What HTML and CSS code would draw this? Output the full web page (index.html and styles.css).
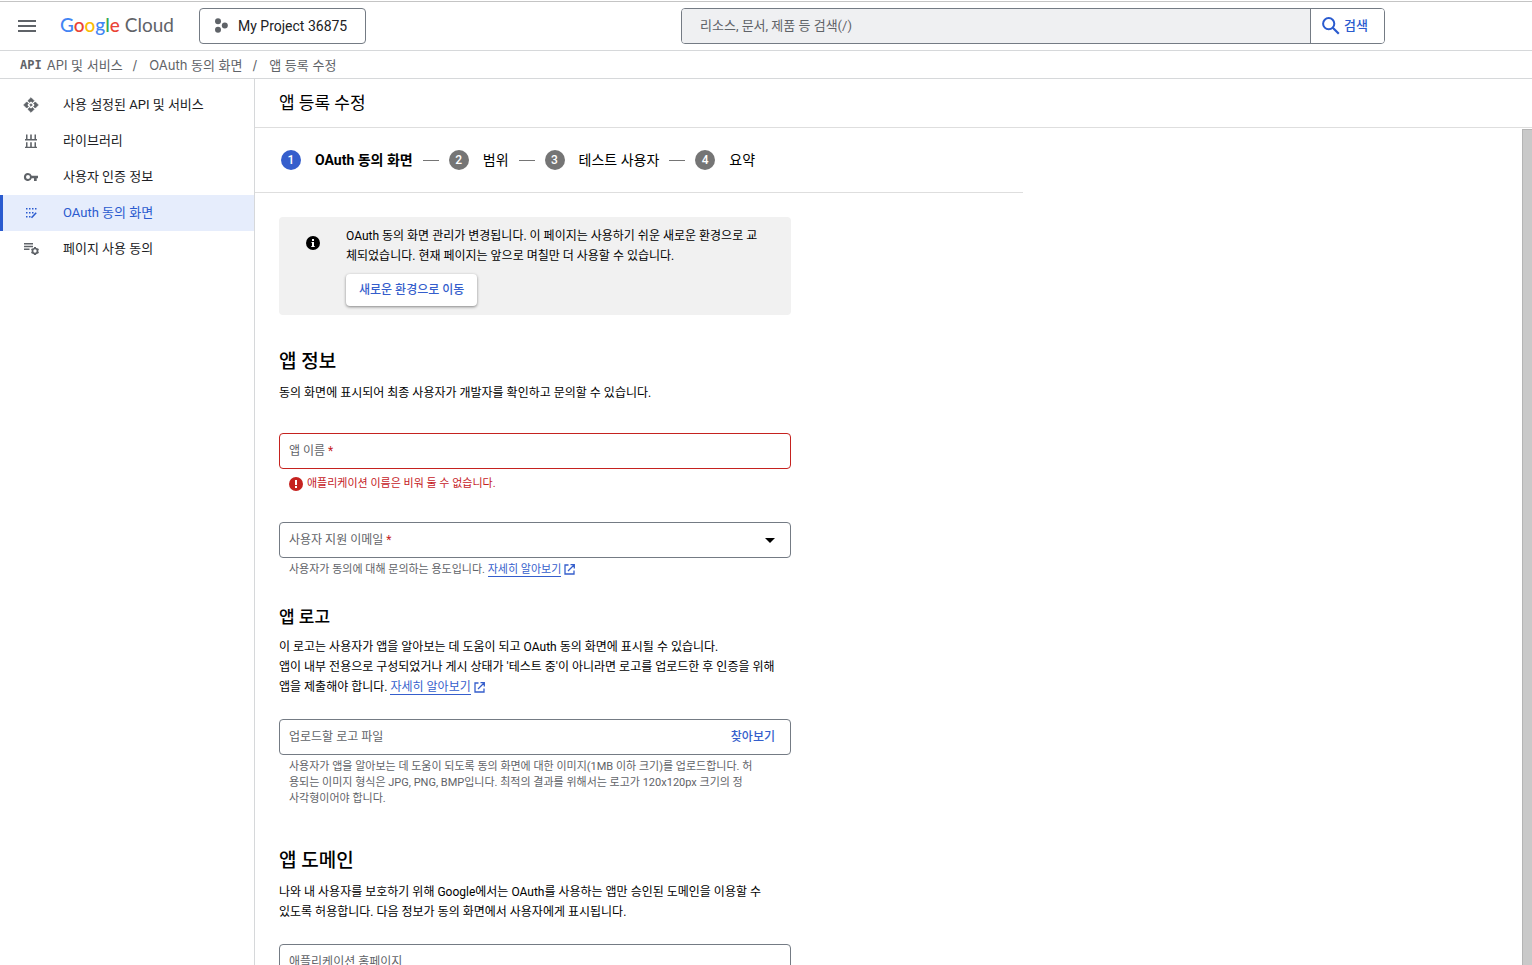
FILE: index.html
```html
<!DOCTYPE html>
<html lang="ko">
<head>
<meta charset="utf-8">
<meta name="viewport" content="width=device-width, initial-scale=1">
<title>앱 등록 수정 – Google Cloud</title>
<link rel="stylesheet" href="styles.css">
</head>
<body>
<div class="app">
  <header class="topbar">
    <button class="menu-button" type="button" aria-label="메뉴">
      <svg width="18" height="12" viewBox="0 0 18 12" aria-hidden="true"><path d="M0 0h18v2H0zM0 5h18v2H0zM0 10h18v2H0z"/></svg>
    </button>
    <a class="logo" href="#"><span class="logo-google"><span class="blue">G</span><span class="red">o</span><span class="yellow">o</span><span class="blue">g</span><span class="green">l</span><span class="red">e</span></span> <span>Cloud</span></a>
    <button class="project" type="button">
      <svg width="14" height="16" viewBox="0 0 14 16" aria-hidden="true"><circle cx="4" cy="3.300" r="3"/><circle cx="10.800" cy="7.500" r="3"/><circle cx="4" cy="11.800" r="3"/></svg>
      My Project 36875
    </button>
    <form class="search" role="search">
      <input class="search-input" type="text" aria-label="검색어" placeholder="리소스, 문서, 제품 등 검색(/)">
      <button class="search-button" type="button">
        <svg width="18" height="18" viewBox="0 0 18 18" aria-hidden="true"><circle cx="6.7" cy="6.7" r="5.6" fill="none" stroke="currentColor" stroke-width="2"/><path d="M10.8 10.8l6 6" stroke="currentColor" stroke-width="2.2"/></svg>
        검색
      </button>
    </form>
  </header>

  <nav class="breadcrumbs" aria-label="탐색경로">
    <span class="api-mark">API</span>
    <a href="#">API 및 서비스</a><span class="slash">/</span>
    <a href="#">OAuth 동의 화면</a><span class="slash">/</span>
    <span>앱 등록 수정</span>
  </nav>

  <div class="body">
    <nav class="sidebar" aria-label="API 및 서비스">
      <a class="nav-item" href="#">
        <svg width="16" height="16" viewBox="0 0 24 24" aria-hidden="true"><path stroke="currentColor" stroke-width="1" stroke-linejoin="round" d="M14 12l-2 2-2-2 2-2zM12 6l2.120 2.120 2.500-2.500L12 1 7.380 5.620l2.500 2.500zM6 12l2.120-2.120-2.500-2.500L1 12l4.620 4.620 2.500-2.500zM18 12l-2.120 2.120 2.500 2.500L23 12l-4.620-4.620-2.500 2.500zM12 18l-2.120-2.120-2.500 2.500L12 23l4.620-4.620-2.500-2.500z"/></svg>
        사용 설정된 API 및 서비스
      </a>
      <a class="nav-item" href="#">
        <svg width="16" height="16" viewBox="0 0 16 16" aria-hidden="true"><path d="M3 1.500h1.500V6h2.700V1.500h1.600V6h2.700V1.500H13V6h1v1.400H2V6h1zM3 9.300h1.500v4.500h2.700V9.300h1.600v4.500h2.700V9.300H13v4.500h1v1.300H2v-1.300h1z"/></svg>
        라이브러리
      </a>
      <a class="nav-item" href="#">
        <svg width="16" height="16" viewBox="0 0 16 16" aria-hidden="true"><path fill-rule="evenodd" d="M5 4a4 4 0 1 0 3.700 5.300H11V12h2.700V9.300H15V6.700H8.700A4 4 0 0 0 5 4zm0 2a2 2 0 1 1 0 4 2 2 0 0 1 0-4z"/></svg>
        사용자 인증 정보
      </a>
      <a class="nav-item selected" href="#" aria-current="page">
        <svg width="16" height="16" viewBox="0 0 16 16" aria-hidden="true"><path d="M3 3h1.500v1.500H3zM6 3h1.500v1.500H6zM9 3h1.500v1.500H9zM12 3h1.500v1.500H12zM3 7h1.500v1.500H3zM6 7h1.500v1.500H6zM9 7h1.500v1.500H9zM3 11h1.500v1.500H3zM6 11h1.500v1.500H6z"/><path d="M8.500 12.700l4.700-4.900" stroke="currentColor" stroke-width="1.600"/></svg>
        OAuth 동의 화면
      </a>
      <a class="nav-item" href="#">
        <svg width="16" height="16" viewBox="0 0 16 16" aria-hidden="true"><path d="M1 2h9v1.500H1zM1 4.800h9v1.500H1zM1 7.600h5.500v1.500H1z"/><circle cx="12" cy="10" r="2.500" fill="none" stroke="currentColor" stroke-width="1.700"/><path d="M12 6v1.500M12 12.500V14M8.500 8l1.400.8M14.100 11.200l1.400.8M8.500 12l1.400-.8M14.100 8.800l1.400-.8" stroke="currentColor" stroke-width="2"/></svg>
        페이지 사용 동의
      </a>
    </nav>

    <main class="main">
      <h1 class="page-title">앱 등록 수정</h1>
      <div class="viewport">
        <div class="content">
          <ol class="stepper">
            <li class="step active"><span class="dot">1</span>OAuth 동의 화면</li>
            <li class="step"><span class="dot">2</span>범위</li>
            <li class="step"><span class="dot">3</span>테스트 사용자</li>
            <li class="step"><span class="dot">4</span>요약</li>
          </ol>

          <form class="form">
            <section class="notice">
              <svg class="notice-icon" width="14" height="14" viewBox="0 0 14 14" aria-hidden="true"><circle cx="7" cy="7" r="7"/><path fill="#fff" d="M6 3h2v2H6zM5.500 6H8v4h.700v1H5.300v-1H6V7h-.500z"/></svg>
              <div class="notice-body">
                <p>OAuth 동의 화면 관리가 변경됩니다. 이 페이지는 사용하기 쉬운 새로운 환경으로 교<br>체되었습니다. 현재 페이지는 앞으로 며칠만 더 사용할 수 있습니다.</p>
                <button class="raised" type="button">새로운 환경으로 이동</button>
              </div>
            </section>

            <section class="section">
              <h2>앱 정보</h2>
              <p>동의 화면에 표시되어 최종 사용자가 개발자를 확인하고 문의할 수 있습니다.</p>
              <div class="field invalid">
                <label for="app-name">앱 이름 <span class="required">*</span></label>
                <input id="app-name" type="text" aria-describedby="app-name-error">
              </div>
              <p class="error" id="app-name-error">
                <svg width="14" height="14" viewBox="0 0 14 14" aria-hidden="true"><circle cx="7" cy="7" r="7" fill="currentColor"/><path fill="#fff" d="M6 3h2v5H6zM6 9h2v2H6z"/></svg>
                애플리케이션 이름은 비워 둘 수 없습니다.
              </p>
              <div class="field next">
                <label for="email">사용자 지원 이메일 <span class="required">*</span></label>
                <select id="email"><option value=""></option></select>
                <svg class="arrow" width="10" height="5" viewBox="0 0 10 5" aria-hidden="true"><path d="M0 0h10L5 5z"/></svg>
              </div>
              <p class="hint">사용자가 동의에 대해 문의하는 용도입니다. <a class="link" href="#"><span>자세히 알아보기</span><svg width="11" height="11" viewBox="0 0 11 11" aria-hidden="true"><path d="M4.500 1H1v9h9V6.500M6.500.700h3.800v3.800M10 1L4 7" fill="none" stroke="currentColor" stroke-width="1.300"/></svg></a></p>
            </section>

            <section class="section logo-section">
              <h3>앱 로고</h3>
              <p>이 로고는 사용자가 앱을 알아보는 데 도움이 되고 OAuth 동의 화면에 표시될 수 있습니다.<br>앱이 내부 전용으로 구성되었거나 게시 상태가 '테스트 중'이 아니라면 로고를 업로드한 후 인증을 위해<br>앱을 제출해야 합니다. <a class="link" href="#"><span>자세히 알아보기</span><svg width="11" height="11" viewBox="0 0 11 11" aria-hidden="true"><path d="M4.500 1H1v9h9V6.500M6.500.700h3.800v3.800M10 1L4 7" fill="none" stroke="currentColor" stroke-width="1.300"/></svg></a></p>
              <div class="field">
                <label for="logo-file">업로드할 로고 파일</label>
                <input id="logo-file" type="text" readonly>
                <button class="browse" type="button">찾아보기</button>
              </div>
              <p class="hint">사용자가 앱을 알아보는 데 도움이 되도록 동의 화면에 대한 이미지(1MB 이하 크기)를 업로드합니다. 허<br>용되는 이미지 형식은 JPG, PNG, BMP입니다. 최적의 결과를 위해서는 로고가 120x120px 크기의 정<br>사각형이어야 합니다.</p>
            </section>

            <section class="section domain-section">
              <h2>앱 도메인</h2>
              <p>나와 내 사용자를 보호하기 위해 Google에서는 OAuth를 사용하는 앱만 승인된 도메인을 이용할 수<br>있도록 허용합니다. 다음 정보가 동의 화면에서 사용자에게 표시됩니다.</p>
              <div class="field">
                <label for="homepage">애플리케이션 홈페이지</label>
                <input id="homepage" type="text">
              </div>
            </section>
          </form>
        </div>
        <div class="scroll-thumb"></div>
      </div>
    </main>
  </div>
</div>
</body>
</html>
```
FILE: styles.css
```css
* { box-sizing: border-box; }

body {
  margin: 0;
  background: #fff;
  color: #000;
  font: 12px/20px Roboto, "Noto Sans CJK KR", sans-serif;
}

button, input, select { font: inherit; color: inherit; margin: 0; }
button { cursor: pointer; }
a { color: inherit; text-decoration: none; }
h1, h2, h3, p, ol { margin: 0; padding: 0; font-weight: 400; }
svg { flex: none; fill: currentColor; }

.app {
  display: flex;
  flex-direction: column;
  height: 100vh;
  overflow: hidden;
}

.topbar {
  display: flex;
  flex: none;
  align-items: center;
  height: 51px;
  padding: 2px 147px 0 12px;
  border-bottom: 1px solid #d6d8da;
  background: linear-gradient(#c4c4c4, #c4c4c4) 0 1px / 100% 1px no-repeat;
}
.menu-button {
  display: flex;
  padding: 6px;
  border: 0;
  background: none;
  color: #5f6368;
}
.logo {
  width: 139px;
  padding: 0 0 2px 18px;
  color: #5f6368;
  font: 19px/24px Lato, sans-serif;
  white-space: nowrap;
}
.logo-google { font-weight: 500; }
.blue { color: #4285f4; }
.red { color: #ea4335; }
.yellow { color: #fbbc04; }
.green { color: #34a853; }
.project {
  display: flex;
  align-items: center;
  gap: 10px;
  height: 36px;
  margin-left: 18px;
  padding: 0 18px 0 14px;
  border: 1px solid #747b84;
  border-radius: 4px;
  background: #fff;
  color: #202124;
  font-size: 14px;
  white-space: nowrap;
}
.project svg { color: #5f6368; }
.search {
  display: flex;
  flex: 0 1 704px;
  height: 36px;
  margin-left: auto;
  border: 1px solid #747b84;
  border-radius: 4px;
  overflow: hidden;
}
.search-input {
  flex: 1;
  min-width: 0;
  padding: 0 18px;
  border: 0;
  background: #eff0f2;
  font-size: 13px;
}
.search-input::placeholder { color: #5f6368; opacity: 1; }
.search-button {
  display: flex;
  align-items: center;
  gap: 4px;
  padding: 0 16px 0 11px;
  border: 0;
  border-left: 1px solid #747b84;
  background: #fff;
  color: #2a5bcf;
  font-size: 13px;
  font-weight: 500;
}

.breadcrumbs {
  display: flex;
  flex: none;
  align-items: center;
  height: 28px;
  padding-left: 20px;
  border-bottom: 1px solid #d6d8da;
  color: #5f6368;
  font-family: Inter, "Noto Sans CJK KR", sans-serif;
  font-size: 13px;
}
.api-mark {
  margin-right: 5px;
  font: bold 12px/20px "DejaVu Sans Mono", monospace;
}
.slash { padding: 0 12px 0 10px; }

.body { display: flex; flex: 1; min-height: 0; }
.sidebar {
  flex: none;
  width: 255px;
  padding-top: 8px;
  border-right: 1px solid #d6d8da;
}
.nav-item {
  display: flex;
  align-items: center;
  gap: 24px;
  height: 36px;
  padding-left: 20px;
  border-left: 3px solid transparent;
  color: #202124;
  font-size: 13px;
}
.nav-item svg { color: #5f6368; }
.nav-item.selected {
  border-left-color: #2a5bcf;
  background: #e6edfc;
  color: #2a5bcf;
}
.nav-item.selected svg { color: #2a5bcf; }

.main { display: flex; flex: 1; flex-direction: column; min-width: 0; }
.page-title {
  flex: none;
  height: 49px;
  padding-left: 24px;
  border-bottom: 1px solid #dedede;
  font-size: 17px;
  line-height: 48px;
}
.viewport {
  display: flex;
  flex: 1;
  justify-content: space-between;
  min-height: 0;
  overflow: hidden;
}
.content { flex: 0 1 768px; }
.scroll-thumb {
  flex: none;
  width: 10px;
  margin-top: 1px;
  border: solid #b4b4b4;
  border-width: 1px 0 0 1px;
  background: #c9c9c9;
}

.stepper {
  display: flex;
  align-items: center;
  height: 65px;
  padding-left: 26px;
  border-bottom: 1px solid #dedede;
  list-style: none;
  font-size: 14px;
}
.step { display: flex; align-items: center; white-space: nowrap; }
.step + .step::before {
  width: 16px;
  height: 1px;
  margin: 0 10px;
  background: #757575;
  content: "";
}
.step.active { font-weight: 700; }
.dot {
  width: 20px;
  height: 20px;
  margin-right: 14px;
  border-radius: 50%;
  background: #757575;
  color: #fff;
  font-size: 12px;
  font-weight: 500;
  text-align: center;
}
.active .dot { background: #355ecc; }

.form { max-width: 536px; padding: 24px 0 0 24px; }
.notice {
  display: flex;
  gap: 26px;
  padding: 9px 20px 9px 27px;
  border-radius: 4px;
  background: #f1f1f1;
}
.notice-icon { margin-top: 10px; }
.notice-body p { white-space: nowrap; }
.raised {
  height: 32px;
  margin-top: 8px;
  padding: 0 13px;
  border: 0;
  border-radius: 4px;
  background: #fff;
  box-shadow: 0 1px 3px rgba(0, 0, 0, .45);
  color: #355ecc;
  font-weight: 500;
}

.section { padding-top: 33px; white-space: nowrap; }
.section h2 { margin-bottom: 7px; font-size: 19px; font-weight: 500; line-height: 28px; }
.section h3 { margin-bottom: 8px; font-size: 17px; font-weight: 500; line-height: 24px; }
.logo-section { padding-top: 27px; }
.domain-section { padding-top: 40px; }

.field {
  display: flex;
  align-items: center;
  height: 36px;
  margin-top: 22px;
  padding: 0 15px 0 9px;
  border: 1px solid #747b84;
  border-radius: 4px;
  color: #5f6368;
}
.field input, .field select {
  flex: 1;
  align-self: stretch;
  min-width: 0;
  border: 0;
  outline: 0;
  appearance: none;
  background: none;
}
.field.invalid { margin-top: 30px; border-color: #c5221f; }
.field.next { margin-top: 30px; }
.required { color: #c5221f; }
.arrow { color: #000; pointer-events: none; }
.browse {
  padding: 0;
  border: 0;
  background: none;
  color: #355ecc;
  font-weight: 500;
}

.section .error, .section .hint {
  padding-left: 10px;
  font-size: 11px;
  line-height: 16px;
}
.section .error {
  display: flex;
  align-items: center;
  gap: 4px;
  margin-top: 7px;
  color: #c5221f;
}
.section .hint { margin-top: 4px; color: #5f6368; }
.link { color: #355ecc; }
.link span { border-bottom: 1px solid #355ecc; }
.link svg { margin-left: 3px; vertical-align: -2px; }
```
